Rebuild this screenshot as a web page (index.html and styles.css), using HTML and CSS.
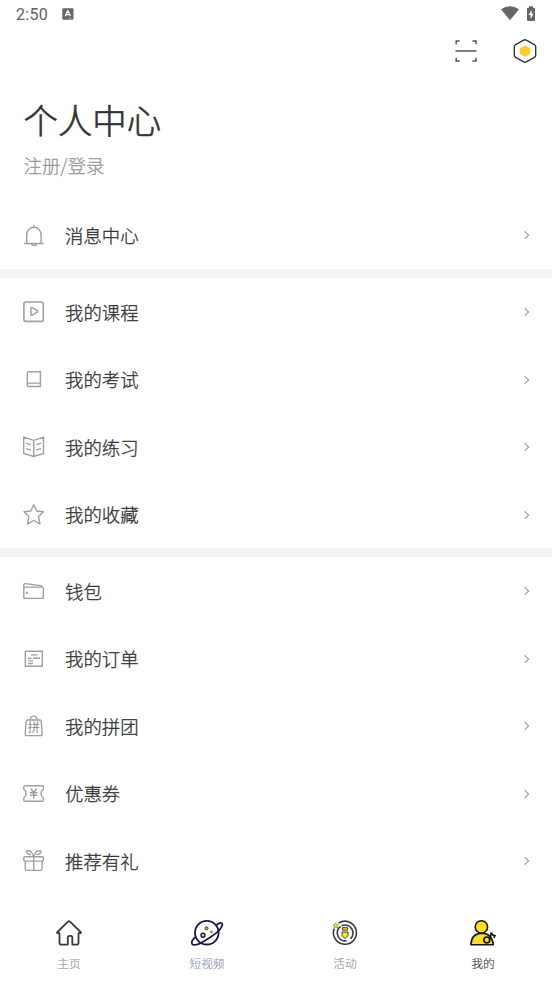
FILE: index.html
```html
<!DOCTYPE html>
<html lang="zh-CN">
<head>
<meta charset="utf-8">
<title>个人中心</title>
<link rel="stylesheet" href="styles.css">
</head>
<body>
<div class="status">
  <span class="time">2:50</span>
  <svg class="ime" width="12" height="12" viewBox="0 0 12 12"><rect x=".3" y=".2" width="11.2" height="11.6" rx="1.2" fill="#666"/><path d="M3.3 8.3 5.6 3h.5l2.3 5.3M4.2 6.7h3.3" fill="none" stroke="#fff" stroke-width="1.3"/><path d="M6 10.5h4.5" stroke="#aaa" stroke-width=".7"/></svg>
  <svg class="wifi" width="20" height="16" viewBox="0 0 20 16"><path d="M1 3.2Q10-2.6 19 3.2L10 14.2Z" fill="#666"/></svg>
  <svg class="battery" width="10" height="16" viewBox="0 0 10 16"><path d="M3 .3h4v1.500h1q1 0 1 1v11.200q0 1-1 1H2q-1 0-1-1V2.800q0-1 1-1h1Z" fill="#666"/><path d="M5.600 4 2.600 9.100h2v4l3-5.400h-2Z" fill="#fff"/></svg>
</div>
<div class="tools">
  <svg width="24" height="24" viewBox="0 0 24 24" fill="none" stroke="#555" stroke-width="1.500"><path d="M2.200 5.300V2.100h3.500M18.500 2.100H22v3.200M2.200 18.700v3.200h3.500M18.500 21.900H22v-3.200M1.500 12h21"/></svg>
  <svg width="26" height="26" viewBox="0 0 26 26"><path d="M11.700 2.100q1.300-.7 2.600 0l8.100 4.500q1.300.7 1.300 2.100v8.600q0 1.400-1.300 2.100l-8.100 4.500q-1.300.7-2.600 0l-8.100-4.500q-1.300-.7-1.300-2.100V8.700q0-1.400 1.300-2.100Z" fill="none" stroke="#333" stroke-width="1.400"/><path d="M13 7.700l4.800 2.700v5.300L13 18.300l-4.800-2.600v-5.300Z" fill="#ffc933" stroke="#ffc933" stroke-width=".8" stroke-linejoin="round"/></svg>
</div>
<header class="head">
  <h1>个人中心</h1>
  <p>注册/登录</p>
</header>
<main>
  <section class="group first">
    <div class="row"><svg class="icon" viewBox="0 0 24 24"><path d="M2 20.500h19.500M4.700 20.500V11.500a7.200 7.200 0 0 1 14.400 0v9M11.900 2v2.300M9.300 20.500a2.600 1.900 0 0 0 5.200 0"/></svg><span>消息中心</span><i class="arrow"></i></div>
  </section>
  <section class="group">
    <div class="row"><svg class="icon" viewBox="0 0 24 24"><rect x="1.900" y="2" width="19.400" height="19.400" rx="2" stroke-width="1.600"/><path d="M8.900 8.400q0-1.300 1.200-.7l5 3q1.100.7 0 1.400l-5 3q-1.200.6-1.200-.7Z" stroke-width="1.500"/></svg><span>我的课程</span><i class="arrow"></i></div>
    <div class="row"><svg class="icon" viewBox="0 0 24 24"><path d="M6.500 3.700h11.900v14.800H6.800q-1.500 0-1.500-1.500V4.900q0-1.200 1.200-1.200ZM5.300 16.700q0-1.600 1.500-1.600h11.600"/></svg><span>我的考试</span><i class="arrow"></i></div>
    <div class="row"><svg class="icon" viewBox="0 0 24 24"><path d="M1.700 2.200 11.700 5.300 21.500 2.200V18.500L11.700 21.500 1.700 18.500ZM11.700 5.300v16.200M4.200 8.200l4.700 1.500M4.200 13.600l4.700 1.500M14.300 9.700l4.700-1.500M14.300 15.100l4.700-1.500"/></svg><span>我的练习</span><i class="arrow"></i></div>
    <div class="row"><svg class="icon" viewBox="0 0 24 24"><path d="M11.700 1.800 14.600 8 21.400 8.800 16.600 13.600 17.900 20.900 11.700 17.500 5.500 20.900 6.800 13.600 2 8.800 8.800 8Z" stroke-linejoin="round"/></svg><span>我的收藏</span><i class="arrow"></i></div>
  </section>
  <section class="group">
    <div class="row"><svg class="icon" viewBox="0 0 24 24"><rect x="1.800" y="8.100" width="19.600" height="11.300" rx="1.500"/><path d="M1.800 10V6.300Q1.800 4.500 3.400 4.600L19.800 6.900V8"/><circle cx="4.900" cy="13.800" r=".5"/></svg><span>钱包</span><i class="arrow"></i></div>
    <div class="row"><svg class="icon" viewBox="0 0 24 24"><path d="M3.300 4.200h17v15h-17ZM9 7.900h6.500M6 11.200h3.500M11 11.200h7M6 13.900h5M6 16.500h5"/></svg><span>我的订单</span><i class="arrow"></i></div>
    <div class="row"><svg class="icon" viewBox="0 0 24 24"><path d="M5.300 6h12.800q1 0 1.100 1l1 13q.1 1.600-1.300 1.600H4.500q-1.400 0-1.300-1.600l1-13q.1-1 1.100-1ZM8.300 6q0-3.900 3.400-3.900T15.100 6"/><text x="11.700" y="18.300">拼</text></svg><span>我的拼团</span><i class="arrow"></i></div>
    <div class="row"><svg class="icon" viewBox="0 0 24 24"><path d="M3 3.800H20.200q1.200 0 1.200 1.200v2.300a5 5 0 0 0 0 8.500v2.300q0 1.200-1.200 1.200H3q-1.200 0-1.200-1.200v-2.300a5 5 0 0 0 0-8.500V5q0-1.200 1.200-1.200ZM8.800 6.800l2.900 3.700 2.900-3.700M8 10.700h7.400M8 13.300h7.400M11.700 10.500v6"/></svg><span>优惠券</span><i class="arrow"></i></div>
    <div class="row"><svg class="icon" viewBox="0 0 24 24"><path d="M2.800 7.700h17.700q1 0 1 1v2.400q0 1-1 1H2.800q-1 0-1-1V8.700q0-1 1-1ZM3.200 12.100h16.900v7.700q0 1.600-1.600 1.600H4.800q-1.600 0-1.600-1.600ZM11.700 7.700v13.700M11.500 7.700C10.500 2.700 7.500 1 4.500 2 3.700 4.300 7 5.700 9 5.600M11.900 7.700C12.900 2.700 15.900 1 18.900 2 19.700 4.300 16.400 5.700 14.400 5.600"/></svg><span>推荐有礼</span><i class="arrow"></i></div>
  </section>
</main>
<nav class="tabs">
  <a class="tab"><svg viewBox="0 0 34 28" fill="none" stroke="#3b3b3b" stroke-width="1.800" stroke-linejoin="round"><path d="M7.500 14.200H5.500q-.9-.4-.1-1.200L16 2.600q1-.9 2 0l10.600 10.400q.8.800-.1 1.200h-2v9.500q0 1.900-1.800 1.900h-4.400v-7q0-1.800-1.700-1.800h-1.100q-1.700 0-1.700 1.800v7H9.300q-1.800 0-1.800-1.900Z"/></svg><span>主页</span></a>
  <a class="tab"><svg viewBox="0 0 34 28" fill="none" stroke="#17174b" stroke-width="1.800"><circle cx="16.800" cy="13.700" r="11.800"/><path d="M26.500 6C30.500 3 33.600 3.200 31.800 7.500 29 14 19 19 13 22.800 6 27 .6 27.100 2 22.200Q3 20 6 17.500"/><circle cx="13" cy="16.200" r="2" fill="#f2e42c" stroke-width="1.400"/><circle cx="16.500" cy="9.300" r="1.500" fill="#f2e42c" stroke-width="1"/><circle cx="21.400" cy="12.900" r="1" fill="#f2e42c" stroke-width=".5"/></svg><span>短视频</span></a>
  <a class="tab"><svg viewBox="0 0 34 28" fill="none" stroke="#3d3d3d" stroke-width="1.600"><path d="M10.500 4.200a11.500 11.500 0 1 1-4.300 5.400"/><path d="M12.500 7.500a8 8 0 0 0 6 14.300M13.500 6.800a8 8 0 0 1 9 13"/><path d="m7.800 3.800.9 1.700 1.900.3-1.400 1.300.4 1.900-1.800-.9-1.800.9.400-1.900L5 5.800l1.900-.3Z" fill="#ffe51e" stroke="#756c18" stroke-width=".6"/><path d="M14.400 8.700h5.200v2.400h-5.200Z" fill="#ffe51e" stroke-width="1"/><path d="M14 13h6v3.500l-3 3-3-3Z" fill="#ffe51e" stroke-width="1"/></svg><span>活动</span></a>
  <a class="tab active"><svg viewBox="0 0 34 28" fill="none" stroke="#191919" stroke-width="1.600"><path d="M4.900 25.700Q5.300 14.500 16 14.100 26 14.500 27.300 25.700Z" fill="#ffdc2e" stroke-linejoin="round"/><circle cx="15.400" cy="7.900" r="6.200" fill="#ffdc2e"/><circle cx="20.800" cy="20.900" r="2.900" fill="#ffdc2e" stroke-width="1.700"/><path d="M23.600 20.900 25.300 13.500Q25.800 16.300 29 16.700L27.900 19" stroke-width="1.600"/></svg><span>我的</span></a>
</nav>
</body>
</html>
```
FILE: styles.css
```css
* { box-sizing: border-box; }
body {
  margin: 0;
  width: 552px;
  height: 982px;
  display: flex;
  flex-direction: column;
  overflow: hidden;
  background: #fff;
  color: #333;
  font-family: "Noto Sans CJK SC", sans-serif;
  font-weight: 300;
  -webkit-text-stroke: .3px;
}
svg { display: block; flex: none; }
.status {
  height: 28px;
  display: flex;
  align-items: center;
  padding: 0 16px 0 16px;
}
.time {
  font: 400 16px/28px Roboto, sans-serif;
  letter-spacing: .3px;
  margin-top: 2px;
  color: #666;
  -webkit-text-stroke-width: .1px;
}
.ime { margin-left: 14px; }
.wifi { margin-left: auto; }
.battery { margin-left: 6px; }
.tools {
  height: 46px;
  display: flex;
  justify-content: flex-end;
  align-items: center;
  gap: 34px;
  padding-right: 14px;
}
.head {
  height: 128px;
  padding: 20px 24px 0 23.500px;
}
h1 {
  margin: 0;
  font-size: 34.400px;
  font-weight: inherit;
  line-height: 50px;
  -webkit-text-stroke-width: .6px;
}
.head p {
  margin: 7px 0 0;
  font-size: 18.400px;
  line-height: 28px;
  color: #999;
}
.group + .group { border-top: 9px solid #f4f4f4; }
.row {
  height: 67.500px;
  display: flex;
  align-items: center;
  padding: 0 24.500px 0 22px;
  font-size: 18.400px;
  line-height: 28px;
}
.first .row { height: 67px; }
.first span { margin-top: -1px; }
.icon {
  width: 24px;
  height: 24px;
  margin-top: 1px;
  margin-right: 19px;
  fill: none;
  stroke: #a0a0a0;
  stroke-width: 1.400;
}
.icon text {
  font-size: 12px;
  font-weight: 400;
  text-anchor: middle;
  fill: #888;
  stroke: none;
}
.arrow {
  width: 6px;
  height: 6px;
  margin-top: 1px;
  margin-left: auto;
  border: solid #999;
  border-width: 1px 1px 0 0;
  transform: rotate(45deg);
}
.first .icon, .first .arrow { margin-top: -1px; }
.tabs {
  flex: 1;
  display: flex;
  padding-top: 24px;
}
.tab {
  flex: 1;
  display: flex;
  flex-direction: column;
  align-items: center;
  gap: 7px;
  font-size: 11.700px;
  line-height: 18px;
  color: #8d96a3;
  -webkit-text-stroke-width: .15px;
}
.tab svg { width: 34px; height: 28px; }
.active { color: #333; }
```
